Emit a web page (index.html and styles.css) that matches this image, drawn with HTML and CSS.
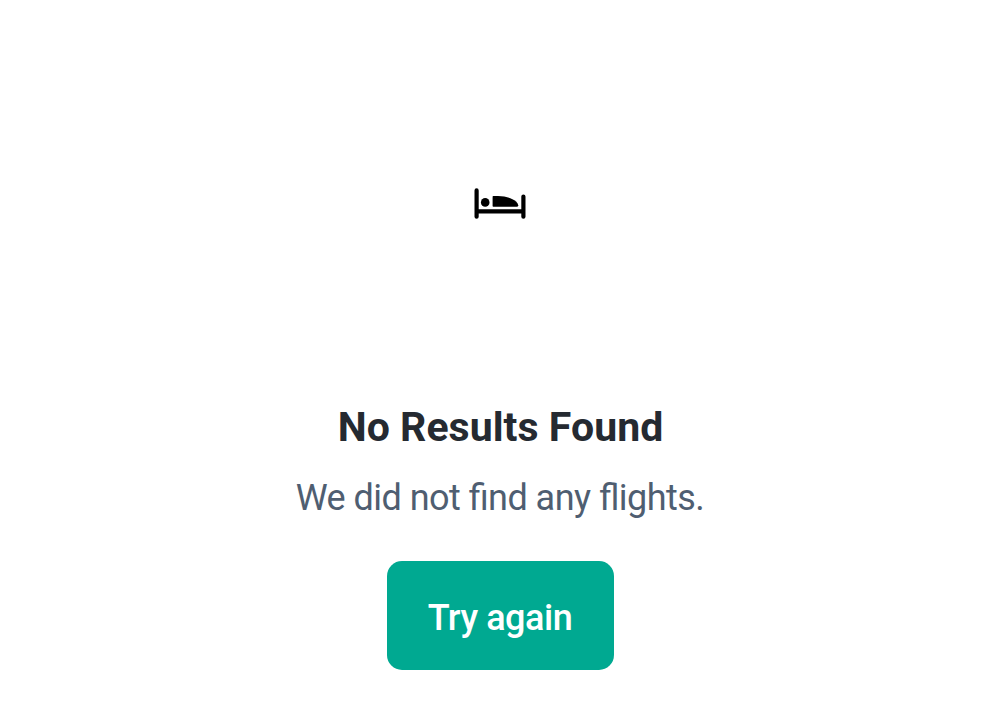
FILE: index.html
```html
<!DOCTYPE html>
<html lang="en">
<head>
<meta charset="utf-8">
<title>No Results Found</title>
<link rel="stylesheet" href="styles.css">
</head>
<body>
<main class="empty-state">
<svg class="bed-icon" viewBox="0 0 52 32" aria-hidden="true">
<path d="M2.6 2.4V28.7M49.4 8.5V28.7M2.6 23.4H49.4" fill="none" stroke="#000" stroke-width="4.2" stroke-linecap="round"/>
<circle cx="11.2" cy="14.4" r="4.3"/>
<path d="M19.3 8H24C31 8 38 10 42 13.5Q44.2 15.6 44.2 17.2Q44.2 18.8 42.7 18.8H19.3Q18.6 18.8 18.6 18.1V8.7Q18.6 8 19.3 8Z"/>
</svg>
<h1 class="title">No Results Found</h1>
<p class="message">We did not find any flights.</p>
<button class="retry" type="button">Try again</button>
</main>
</body>
</html>
```
FILE: styles.css
```css
body {
  margin: 0;
  background: #fff;
  font-family: Roboto, sans-serif;
}
.empty-state {
  display: flex;
  flex-direction: column;
  align-items: center;
  padding-top: 188px;
}
.bed-icon {
  width: 52px;
  height: 32px;
}
.title {
  margin: 182px 0 0;
  padding-left: 1px;
  font-size: 41px;
  line-height: 50px;
  font-weight: 700;
  letter-spacing: 0.04px;
  color: #252a31;
}
.message {
  margin: 20px 0 0;
  font-size: 36px;
  line-height: 52px;
  letter-spacing: -0.53px;
  font-feature-settings: "liga" 1;
  color: #4f5e71;
}
.retry {
  width: 227px;
  height: 109px;
  margin-top: 37px;
  padding: 6px 0 0;
  border: 0;
  border-radius: 15px;
  background: #00a991;
  color: #fff;
  font: 500 36px/103px Roboto, sans-serif;
  letter-spacing: -0.45px;
}
```
